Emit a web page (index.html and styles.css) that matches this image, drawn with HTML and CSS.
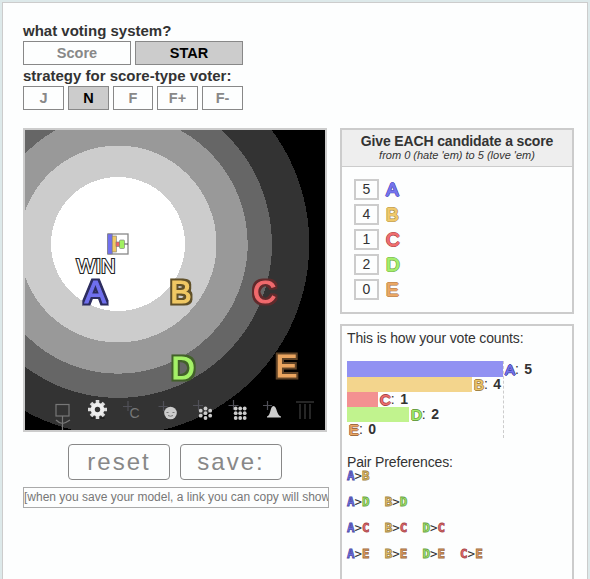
FILE: index.html
```html
<!DOCTYPE html>
<html lang="en">
<head>
<meta charset="utf-8">
<title>Voting sandbox</title>
<link rel="stylesheet" href="styles.css">
</head>
<body>
<main class="page">
  <section class="config">
    <div class="label">what voting system?</div>
    <div class="choices two"><button>Score</button><button class="on">STAR</button></div>
    <div class="label">strategy for score-type voter:</div>
    <div class="choices five"><button>J</button><button class="on">N</button><button>F</button><button>F+</button><button>F-</button></div>
  </section>
  <div class="columns">
    <section class="left">
      <svg class="arena" viewBox="25 130 300 300">
        <!-- dark rim in a deeper shade of the letter's own colour -->
        <filter id="rim" x="-20%" y="-20%" width="140%" height="140%" color-interpolation-filters="sRGB">
          <feMorphology in="SourceGraphic" operator="dilate" radius="1.5" result="fat"/>
          <feColorMatrix in="fat" type="matrix" values=".4 0 0 0 0  0 .4 0 0 0  0 0 .4 0 0  0 0 0 1 0" result="dark"/>
          <feGaussianBlur in="dark" stdDeviation=".35" result="soft"/>
          <feMerge><feMergeNode in="soft"/><feMergeNode in="SourceGraphic"/></feMerge>
        </filter>
        <rect x="25" y="130" width="300" height="300" fill="#000"/>
        <g shape-rendering="crispEdges">
          <circle cx="118" cy="244" r="191.3" fill="#333"/>
          <circle cx="118" cy="244" r="154" fill="#666"/>
          <circle cx="118" cy="244" r="129.7" fill="#999"/>
          <circle cx="118" cy="244" r="98.5" fill="#ccc"/>
          <circle cx="118" cy="244" r="67" fill="#fff"/>
        </g>
        <!-- voter -->
        <rect x="108" y="234" width="20" height="20" fill="#fff" stroke="#888" stroke-width="1.3"/>
        <path d="M124 244h4" stroke="#444"/>
        <g stroke="#777" stroke-width=".6">
          <rect x="107.7" y="234" width="4.5" height="20" fill="#7070ee"/>
          <rect x="112.2" y="236" width="4.2" height="16" fill="#f0c864"/>
          <rect x="116" y="242" width="4" height="4.5" fill="#f06464"/>
          <rect x="119.5" y="240" width="5" height="8.5" rx="1" fill="#a0f060"/>
        </g>
        <text class="win" x="96" y="273" textLength="39">WIN</text>
        <g class="cand">
          <text class="m-a" x="95.5" y="303">A</text>
          <text class="m-b" x="181" y="303">B</text>
          <text class="m-c" x="264.5" y="303">C</text>
          <text class="m-d" x="183" y="378.500">D</text>
          <text class="m-e" x="286.5" y="377">E</text>
        </g>
        <!-- toolbar -->
        <g fill="none" stroke="#777" stroke-width="1.2">
          <rect x="56" y="404.5" width="13" height="11.5"/>
          <path d="M62.5 416v14M56 420q3 3 6.5 3.500q4-1 7.500-3.500"/>
        </g>
        <g transform="translate(97.500 409.500)">
          <path d="M-7 7.500h14v2h-14z" fill="#222"/>
          <path stroke="#ddd" stroke-width="3.600" d="M0-9.500V9.500M-9.500 0H9.500M-6.500-6.500L6.500 6.500M-6.500 6.500L6.500-6.500"/>
          <circle r="6.800" fill="#eee"/><circle r="2.700" fill="#333"/>
        </g>
        <g stroke="#505058" stroke-width="1.2">
          <path d="M123 406.500h9M128 401v10M158.500 406.500h9M163.500 401v10M193 405.500h10M198.500 400v10M228.500 405.500h10M233.500 400v10M263 405.500h9M267.500 401v9"/>
        </g>
        <text x="129.500" y="417.500" class="tool-c">C</text>
        <circle cx="170.500" cy="413" r="6.300" fill="#ccc"/>
        <path d="M166.500 412.500h2M172.500 412.500h2M168 415.500q2.500 1.500 5 0" stroke="#777" fill="none"/>
        <g fill="#ccc">
          <circle cx="205.500" cy="408.500" r="1.900"/><circle cx="205.500" cy="413.200" r="1.900"/><circle cx="205.500" cy="418" r="1.900"/>
          <circle cx="200.700" cy="410.700" r="1.900"/><circle cx="200.700" cy="415.700" r="1.900"/><circle cx="210.200" cy="410.700" r="1.900"/><circle cx="210.200" cy="415.700" r="1.900"/>
          <circle cx="235.700" cy="408.500" r="1.900"/><circle cx="240.200" cy="408.500" r="1.900"/><circle cx="244.700" cy="408.500" r="1.900"/>
          <circle cx="235.700" cy="413.200" r="1.900"/><circle cx="240.200" cy="413.200" r="1.900"/><circle cx="244.700" cy="413.200" r="1.900"/>
          <circle cx="235.700" cy="418" r="1.900"/><circle cx="240.200" cy="418" r="1.900"/><circle cx="244.700" cy="418" r="1.900"/>
          <path d="M267 417.500V416.500C271 415.500 270 406 273.500 406S276.500 415.500 281 416.500V417.500Z"/>
        </g>
        <path d="M296 402h18M300 404v15M305 404v15M310 404v15" stroke="#333" stroke-width="1.500"/>
      </svg>
      <div class="actions"><button>reset</button><button>save:</button></div>
      <div class="link">[when you save your model, a link you can copy will show</div>
    </section>
    <section class="right">
      <div class="panel ballot">
        <header><b>Give EACH candidate a score</b><i>from 0 (hate 'em) to 5 (love 'em)</i></header>
        <div class="scores">
          <div class="score"><span>5</span><b class="a">A</b></div>
          <div class="score"><span>4</span><b class="b">B</b></div>
          <div class="score"><span>1</span><b class="c">C</b></div>
          <div class="score"><span>2</span><b class="d">D</b></div>
          <div class="score"><span>0</span><b class="e">E</b></div>
        </div>
      </div>
      <div class="panel counts">
        <div class="title">This is how your vote counts:</div>
        <div class="chart">
          <div class="row first"><i class="bar bar-a"></i><b class="a">A</b>:&nbsp;<strong>5</strong></div>
          <div class="row"><i class="bar bar-b"></i><b class="b">B</b>:&nbsp;<strong>4</strong></div>
          <div class="row"><i class="bar bar-c"></i><b class="c">C</b>:&nbsp;<strong>1</strong></div>
          <div class="row"><i class="bar bar-d"></i><b class="d">D</b>:&nbsp;<strong>2</strong></div>
          <div class="row"><i class="bar bar-e"></i><b class="e">E</b>:&nbsp;<strong>0</strong></div>
        </div>
        <div class="title">Pair Preferences:</div>
        <div class="pairs">
          <div><span><b class="a">A</b>&gt;<b class="b">B</b></span></div>
          <div><span><b class="a">A</b>&gt;<b class="d">D</b></span><span><b class="b">B</b>&gt;<b class="d">D</b></span></div>
          <div><span><b class="a">A</b>&gt;<b class="c">C</b></span><span><b class="b">B</b>&gt;<b class="c">C</b></span><span><b class="d">D</b>&gt;<b class="c">C</b></span></div>
          <div><span><b class="a">A</b>&gt;<b class="e">E</b></span><span><b class="b">B</b>&gt;<b class="e">E</b></span><span><b class="d">D</b>&gt;<b class="e">E</b></span><span><b class="c">C</b>&gt;<b class="e">E</b></span></div>
        </div>
      </div>
    </section>
  </div>
</main>
</body>
</html>
```
FILE: styles.css
```css
* { box-sizing: border-box; }
html, body { height: 100%; overflow: hidden; }
body { margin: 0; padding: 2px 2px 0; background: #dde9ea; color: #333; font-family: "Liberation Sans", Arial, sans-serif; }
button { font-family: inherit; margin: 0; padding: 0; background: #fdfefe; color: #888; border: 1px solid #888; }
.page { height: 600px; padding: 18px 12px 20px 20px; background: #fdfefe; border: 1px solid #ccc; }
.config { width: 220px; height: 107px; }
.label { height: 20px; line-height: 20px; font-size: 15px; font-weight: bold; white-space: nowrap; }
.label + .choices + .label { height: 21px; line-height: 22px; }
.choices { display: grid; column-gap: 4px; }
.choices button { height: 24px; font-size: 14.5px; font-weight: bold; }
.two { grid-template-columns: 108px 108px; }
.five { grid-template-columns: 41px 41px 40px 41px 41px; }
.choices .on { background: #ccc; color: #000; }
.columns { display: flex; gap: 11px; }
.left { flex: none; width: 306px; }
.arena { display: block; width: 304px; height: 304px; border: 2px solid #ccc; }
.arena text { text-anchor: middle; }
.win { font-size: 20px; fill: #fff; stroke: #222; stroke-width: 2.2px; paint-order: stroke; }
.cand { font-size: 32px; stroke-width: 1.2px; }
.cand text { filter: url(#rim); }
.m-a { fill: #7070ee; stroke: #7070ee; }
.m-b { fill: #f0c864; stroke: #f0c864; }
.m-c { fill: #f06a6d; stroke: #f06a6d; }
.m-d { fill: #a5f268; stroke: #a5f268; }
.m-e { fill: #eaa560; stroke: #eaa560; }
.arena .tool-c { font-size: 14px; fill: #777; text-anchor: start; }
.actions { display: flex; justify-content: center; gap: 10px; margin: 12px 2px 7px 0; }
.actions button { width: 102px; height: 36px; border-radius: 4px; font-size: 24px; letter-spacing: 2px; }
.link { height: 21px; border: 1px solid #aaa; font-size: 12px; line-height: 18px; color: #777; overflow: hidden; white-space: nowrap; }
.right { flex: none; width: 234px; display: flex; flex-direction: column; gap: 10px; }
.panel { border: 2px solid #ccc; }
.ballot { height: 186px; }
.ballot header { height: 37px; padding-top: 3px; background: #eee; border-bottom: 1px solid #ccc; text-align: center; }
.ballot header b { display: block; font-size: 14px; line-height: 16px; letter-spacing: -.13px; }
.ballot header i { display: block; font-size: 11px; line-height: 13px; }
.scores { padding: 12px; display: grid; row-gap: 4px; }
.score { display: flex; align-items: center; gap: 7px; height: 21px; }
.score span { width: 25px; height: 21px; border: 2px solid #ccc; text-align: center; font-size: 14px; line-height: 17px; }
.a { color: #7575ee; --edge: #4a4aa4; }
.b { color: #f0c96c; --edge: #a08346; }
.c { color: #f06f6f; --edge: #a44448; }
.d { color: #a4ee6d; --edge: #69a043; }
.e { color: #eba867; --edge: #9e6c42; }
.score b, .row b {
  font-weight: normal;
  -webkit-text-stroke: .8px currentColor;
  text-shadow: 1px 0 var(--edge), -1px 0 var(--edge), 0 1px var(--edge), 0 -1px var(--edge);
}
.score b { font-size: 19px; line-height: 21px; }
.counts { height: 280px; padding: 4px 5px; }
.title { font-size: 14px; line-height: 16px; letter-spacing: -.14px; }
.chart { width: 157px; height: 77px; margin: 15px 0 17px; border-right: 1px dashed #ccc; }
.row { display: flex; height: 15px; align-items: center; white-space: nowrap; font-size: 14px; line-height: 15px; }
.row.first { height: 16px; }
.row b { font-size: 15px; -webkit-text-stroke-width: .2px; }
.row strong { margin-left: 1.5px; }
.bar { flex: none; height: 100%; margin-right: 2px; }
.bar-a { width: 156px; background: #9191f2; }
.bar-b { width: 125px; background: #f3d58d; }
.bar-c { width: 31px; background: #f39191; }
.bar-d { width: 62px; background: #c1f38e; }
.bar-e { width: 0; }
.chart + .title { line-height: 14px; }
.pairs { font-family: "DejaVu Sans Mono", monospace; font-size: 12.5px; }
.pairs div { display: grid; grid-template-columns: repeat(4, 37.7px); height: 26px; line-height: 13px; }
.pairs b { -webkit-text-stroke: .8px var(--edge); }
```
